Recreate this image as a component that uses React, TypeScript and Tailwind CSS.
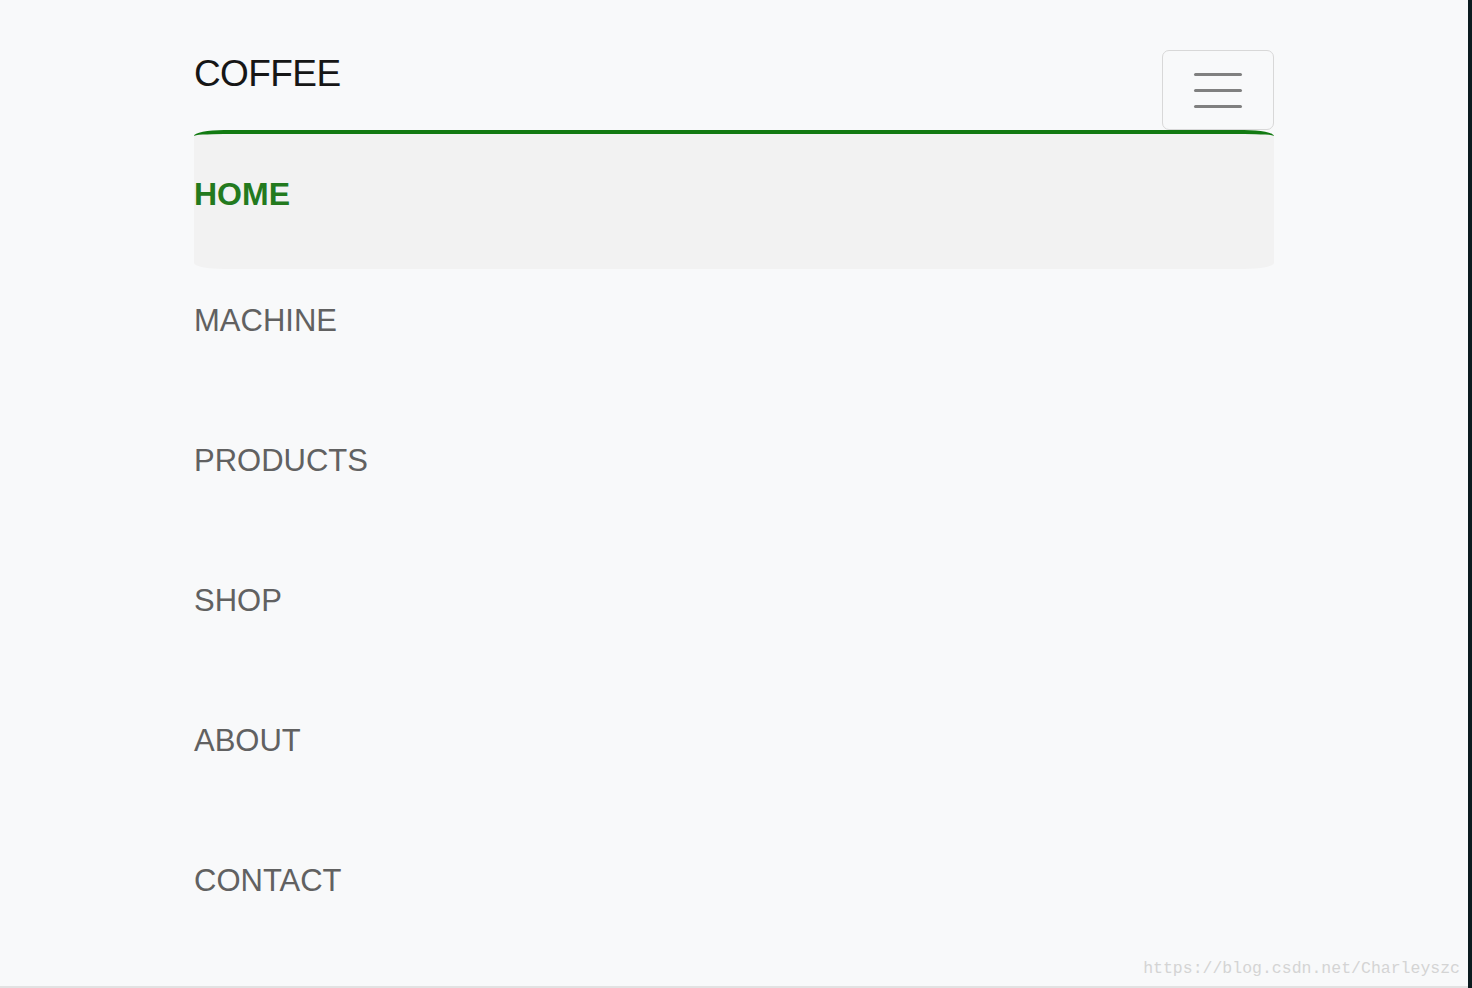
import React from "react";

const items = ["MACHINE", "PRODUCTS", "SHOP", "ABOUT", "CONTACT"];

export default function App() {
  return (
    <div className="flex h-[988px] w-[1472px] overflow-hidden" style={{ fontFamily: '"Liberation Sans", Arial, sans-serif' }}>
      <div className="relative h-[988px] w-[1468px] border-b-2 border-[#e2e2e2] bg-[#f8f9fa]">
        <div className="mx-auto w-[1080px]">
          <div className="flex items-start justify-between pt-[50px]">
            <div className="mt-[2px] text-[37px] leading-[44px] tracking-[-0.6px] text-[#161616]">COFFEE</div>
            <div className="flex h-[80px] w-[112px] flex-col items-center justify-center gap-[13px] rounded-[7px] border border-[#d8d8d8]">
              <span className="h-[3px] w-[48px] rounded-full bg-[#808080]" />
              <span className="h-[3px] w-[48px] rounded-full bg-[#808080]" />
              <span className="h-[3px] w-[48px] rounded-full bg-[#808080]" />
            </div>
          </div>
          <ul>
            <li className="h-[139px] rounded-[30px/6px] border-t-4 border-[#127a12] bg-[#f2f2f2] pt-[41px]">
              <span className="text-[32px] font-bold leading-[38px] text-[#237a1e]">HOME</span>
            </li>
            {items.map((t) => (
              <li key={t} className="h-[140px] pt-[34px]">
                <span className="text-[31px] leading-[36px] text-[#616161]">{t}</span>
              </li>
            ))}
          </ul>
        </div>
        <div
          className="absolute bottom-[4px] right-[8px] text-[16.5px] text-[#d4d4d4]"
          style={{ fontFamily: '"Liberation Mono", monospace' }}
        >
          https://blog.csdn.net/Charleyszc
        </div>
      </div>
      <div className="h-[988px] w-[4px] bg-[#0b1b1f]" />
    </div>
  );
}
